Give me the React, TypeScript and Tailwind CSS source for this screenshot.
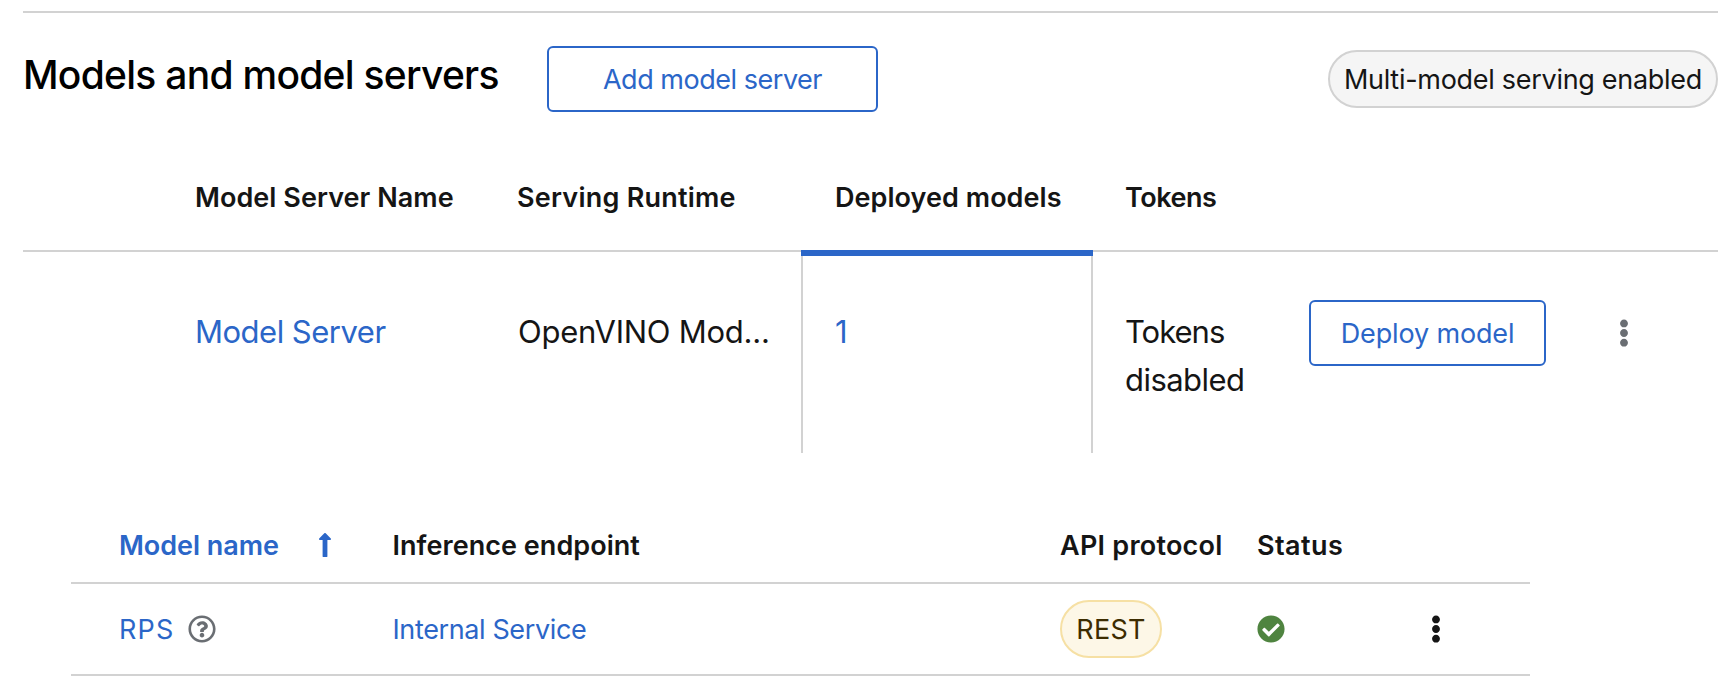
import {
  FaCheckCircle,
  FaEllipsisV,
  FaRegQuestionCircle,
} from "react-icons/fa";

function SortArrowUp() {
  return (
    <svg viewBox="0 0 12 24" className="mb-[2px] ml-[8px] h-[24px] w-[12px]" fill="currentColor" aria-hidden="true">
      <path d="M3.6 7H.8C.1 7-.3 6 .2 5.5L5.3.3a1 1 0 0 1 1.4 0l5.1 5.2c.5.5.1 1.5-.6 1.5H8.4v16.3c0 .5-.3.8-.8.8H4.4c-.5 0-.8-.3-.8-.8z" />
    </svg>
  );
}

function SectionHeader() {
  return (
    <header className="flex h-[101px] items-start">
      <h2 className="mt-[42px] w-[524px] text-[39px] leading-[40px] font-medium tracking-[-0.73px] whitespace-nowrap text-black">
        Models and model servers
      </h2>
      <button className="mt-[33px] flex h-[66px] w-[331px] items-center justify-center rounded-md border-2 border-[#2b66c8] pt-[2px] text-[27px] tracking-[-0.47px] text-[#2b66c8]">
        Add model server
      </button>
      <span className="mt-[37px] ml-auto flex h-[58px] w-[390px] items-center justify-center rounded-full border-2 border-[#d2d2d2] bg-[#f5f5f5] pt-[2px] text-[27px] tracking-[-0.29px] whitespace-nowrap">
        Multi-model serving enabled
      </span>
    </header>
  );
}

function ServerTable() {
  return (
    <section>
      <div className="grid h-[138px] grid-cols-[172px_322px_318px_289px_1fr] border-b-2 border-[#d2d2d2] pt-[64px] text-[27px] leading-[40px] font-semibold whitespace-nowrap">
        <span />
        <span className="tracking-[0.05px]">Model Server Name</span>
        <span className="tracking-[0.23px]">Serving Runtime</span>
        <span className="tracking-[0.05px]">Deployed models</span>
        <span className="pl-[1px] tracking-[-0.48px]">Tokens</span>
      </div>
      <div className="grid h-[203px] grid-cols-[172px_322px_284px_292px_216px_237px_1fr] text-[31px] leading-[48px]">
        <span />
        <a className="mt-[56px] tracking-[-0.5px] text-[#2b66c8]">Model Server</a>
        <span className="mt-[56px] pl-[1px] tracking-[-0.25px] whitespace-nowrap">OpenVINO Mod...</span>
        <div className="-mt-[2px] h-[205px] border-t-[6px] border-[#2b66c8]">
          <div className="h-[197px] border-x-2 border-[#d2d2d2] pt-[52px] pl-[32px]">
            <a className="text-[#2b66c8]">1</a>
          </div>
        </div>
        <div className="mt-[56px] w-[150px] pl-[32px] tracking-[-0.55px]">
          <span className="tracking-[-1px]">Tokens</span> disabled
        </div>
        <button className="mt-[48px] flex h-[66px] items-center justify-center rounded-md border-2 border-[#2b66c8] pt-[1px] text-[27px] tracking-[-0.15px] text-[#2b66c8]">
          Deploy model
        </button>
        <FaEllipsisV className="mt-[67px] ml-[64px] size-[28px] text-[#6a6e73]" />
      </div>
    </section>
  );
}

const nestedColumns = "grid grid-cols-[273.5px_667.5px_197px_161px_1fr] pl-[48px]";

function ModelTable() {
  return (
    <section className="ml-[48px] w-[1459px] pt-[51px] text-[27px] whitespace-nowrap">
      <div className={`${nestedColumns} h-[78px] items-center border-b-2 border-[#d2d2d2] pt-[3px] font-semibold`}>
        <span className="flex items-center tracking-[-0.03px] text-[#2b66c8]">
          <span className="w-[192px] pt-[1px]">Model name</span>
          <SortArrowUp />
        </span>
        <span className="pt-[1px] tracking-[0.04px]">Inference endpoint</span>
        <span className="pt-[1px] tracking-[0.24px]">API protocol</span>
        <span className="pt-[1px] tracking-[0.44px]">Status</span>
      </div>
      <div className={`${nestedColumns} h-[92px] items-center border-b-2 border-[#d2d2d2]`}>
        <span className="flex items-center text-[#2b66c8]">
          <span className="w-[69px] pt-[2px] tracking-[1.2px]">RPS</span>
          <FaRegQuestionCircle className="size-[28px] text-[#6a6e73]" />
        </span>
        <a className="pt-[2px] tracking-[-0.38px] text-[#2b66c8]">Internal Service</a>
        <span className="flex h-[58px] w-[102px] items-center justify-center rounded-full border-2 border-[#f6e0a4] bg-[#fdf7e7] pt-[2px] tracking-[0.3px] text-[#3d2c00]">
          REST
        </span>
        <FaCheckCircle className="size-[28px] text-[#4f8440]" />
        <FaEllipsisV className="ml-[4px] size-[28px]" />
      </div>
    </section>
  );
}

export default function App() {
  return (
    <main className="h-[696px] overflow-hidden bg-white pt-[11px] pl-[23px] font-['Inter','Liberation_Sans',sans-serif] text-[#151515]">
      <div className="border-t-2 border-[#d2d2d2]">
        <SectionHeader />
        <ServerTable />
        <ModelTable />
      </div>
    </main>
  );
}
